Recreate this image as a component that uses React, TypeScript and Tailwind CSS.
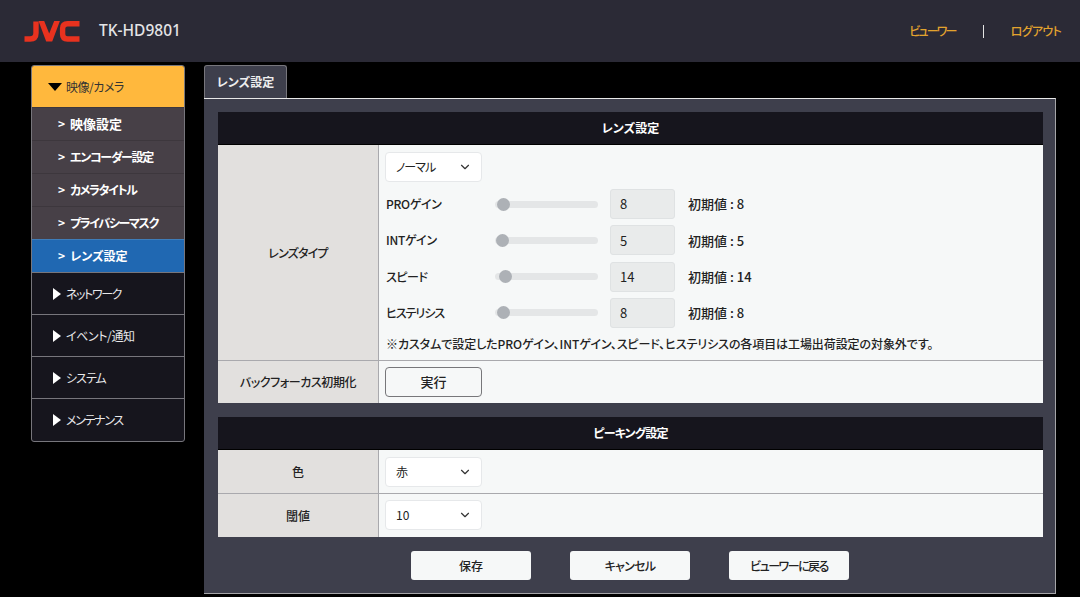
import React from 'react';
import { ChevronDown } from 'lucide-react';

// katakana in the original font is much narrower, so each string carries its own tracking
const subItems = [
  { label: '映像設定', cls: 'text-[13px]' },
  { label: 'エンコーダー設定', cls: 'text-[12px] tracking-[-1.3px]' },
  { label: 'カメラタイトル', cls: 'text-[12px] tracking-[-1.4px]' },
  { label: 'プライバシーマスク', cls: 'text-[12px] tracking-[-1.4px]' },
  { label: 'レンズ設定', cls: 'text-[12px]' },
];
const navItems = [
  { label: 'ネットワーク', cls: 'tracking-[-1.4px]', h: 'h-[42px]' },
  { label: 'イベント/通知', cls: 'tracking-[-0.4px]', h: 'h-[42px]' },
  { label: 'システム', cls: 'tracking-[-1px]', h: 'h-[42px]' },
  { label: 'メンテナンス', cls: 'tracking-[-1.3px]', h: 'h-[43px]' },
];
const sliders = [
  { label: 'PROゲイン', value: 8, thumb: 'ml-[2px]', cls: 'tracking-[-0.3px]' },
  { label: 'INTゲイン', value: 5, thumb: 'ml-[1px]', cls: 'tracking-[-0.3px]' },
  { label: 'スピード', value: 14, thumb: 'ml-[4px]', cls: 'tracking-[-0.5px]' },
  { label: 'ヒステリシス', value: 8, thumb: 'ml-[2px]', cls: 'tracking-[-1px]' },
];

function Logo() {
  return (
    <svg width="56" height="21" viewBox="0 0 56 21" className="shrink-0">
      <path d="M12 0.5 V12 Q12 18 6 18 H0.5" fill="none" stroke="#e8321f" strokeWidth="5.4" />
      <polygon points="14.5,0 20.2,0 25.2,12.5 30.2,0 35.9,0 28.2,20.5 22.2,20.5" fill="#e8321f" />
      <path d="M55.5 2.7 H43.5 Q38.6 2.7 38.6 7.5 V13.3 Q38.6 18 43.5 18 H55.5" fill="none" stroke="#e8321f" strokeWidth="5.4" />
    </svg>
  );
}

function Select({ value, cls }: { value: string; cls?: string }) {
  return (
    <div className="w-[97px] h-[30px] bg-white border border-[#e6e8ea] rounded-[4px] flex items-center justify-between pl-[10px] pr-[9px] text-[12px] text-[#222]">
      <span className={cls}>{value}</span>
      <ChevronDown className="w-[14px] h-[14px] text-[#333]" strokeWidth={2} />
    </div>
  );
}

function SectionHead({ title, cls }: { title: string; cls?: string }) {
  return (
    <div className={`h-[33px] bg-[#16151d] flex items-center justify-center text-white text-[12px] font-bold border-b border-black ${cls ?? ''}`}>
      {title}
    </div>
  );
}

function Row({ label, labelCls, cellCls, children, last }: { label: string; labelCls?: string; cellCls: string; children: React.ReactNode; last?: boolean }) {
  return (
    <div className={`flex ${last ? '' : 'border-b border-[#a9a9ad]'}`}>
      <div className={`w-[161px] shrink-0 bg-[#e2e0de] border-r border-[#a9a9ad] flex items-center justify-center text-[12px] font-medium text-[#222] ${labelCls ?? ''}`}>
        {label}
      </div>
      <div className={`flex-1 bg-[#f6f8f8] px-[6px] ${cellCls}`}>{children}</div>
    </div>
  );
}

function FootButton({ label, cls }: { label: string; cls?: string }) {
  return (
    <button className={`w-[120px] h-[29px] bg-[#f6f8f8] rounded-[3px] text-[12px] font-medium text-[#222] ${cls ?? ''}`}>{label}</button>
  );
}

export default function App() {
  return (
    <div className="h-[597px] w-full bg-black overflow-hidden font-['Noto_Sans_CJK_JP','Noto_Sans',sans-serif] [font-feature-settings:'palt']">
      <header className="h-[62px] bg-[#2b2a36] flex items-center pl-[24px] pr-[19px]">
        <Logo />
        <span className="ml-[19px] text-[15.5px] font-medium text-[#e4e4e6] font-['Noto_Sans',sans-serif]">TK-HD9801</span>
        <div className="ml-auto flex items-center text-[12px] font-medium text-[#e2a32e]">
          <span className="tracking-[-1.8px]">ビューワー</span>
          <span className="mx-[27px] w-px h-[13px] bg-[#e4e4e4]" />
          <span className="tracking-[-0.7px]">ログアウト</span>
        </div>
      </header>

      <div className="flex items-start pl-[31px] pt-[3px] gap-[19px]">
        <nav className="w-[154px] shrink-0 rounded-[3px] border border-[#77767c] overflow-hidden bg-[#16151d]">
          <div className="h-[41px] bg-[#ffb83d] flex items-center pl-[16px] text-[12px] text-[#333] gap-[4px]">
            <span className="w-0 h-0 border-x-[7px] border-x-transparent border-t-[8px] border-t-black" />
            <span className="tracking-[-0.5px]">映像/カメラ</span>
          </div>
          {subItems.map((s) => {
            const active = s.label === 'レンズ設定';
            return (
              <div
                key={s.label}
                className={`h-[33px] flex items-center pl-[26px] font-bold text-white border-t ${active ? 'bg-[#2068b2] border-[#3e7db9]' : 'bg-[#474047] border-[#3d373d]'}`}
              >
                <span className="mr-[5px] text-[12px]">&gt;</span>
                <span className={s.cls}>{s.label}</span>
              </div>
            );
          })}
          {navItems.map((n) => (
            <div key={n.label} className={`${n.h} flex items-center pl-[21px] gap-[5px] text-[12px] text-[#e8e8ea] border-t border-[#77767c]`}>
              <span className="w-0 h-0 border-y-[6px] border-y-transparent border-l-[8px] border-l-white" />
              <span className={n.cls}>{n.label}</span>
            </div>
          ))}
        </nav>

        <main className="w-[852px] shrink-0">
          <div className="w-[83px] h-[33px] bg-[#3e3f4c] border border-b-0 border-[#77767c] rounded-t-[3px] flex items-center justify-center text-[12px] font-bold text-[#eee]">
            レンズ設定
          </div>
          <div className="h-[496px] bg-[#3e3f4c] border-t border-t-[#e8e8e8] border-b border-b-[#a5a5a8] border-r border-r-[#a5a5a8] pl-[14px] pr-[12px] pt-[13px]">
            <SectionHead title="レンズ設定" />
            <Row label="レンズタイプ" labelCls="tracking-[-0.8px]" cellCls="py-[7px]">
              <Select value="ノーマル" cls="tracking-[-1px]" />
              <div className="mt-[7px] h-[139px] flex flex-col justify-between">
                {sliders.map((s) => (
                  <div key={s.label} className="flex items-center h-[30px] text-[12px] font-medium text-[#222]">
                    <span className={`w-[110px] pl-[1px] ${s.cls}`}>{s.label}</span>
                    <div className="w-[103px] h-[7px] rounded-full bg-[#e4e6e7] flex items-center">
                      <span className={`w-[13px] h-[13px] rounded-full bg-[#adb1b6] ${s.thumb}`} />
                    </div>
                    <div className="ml-[12px] w-[65px] h-[30px] bg-[#e9ebeb] border border-[#dfe2e3] rounded-[3px] flex items-center pl-[9px] text-[13px] font-normal">
                      {s.value}
                    </div>
                    <span className="ml-[13px] text-[13px]">初期値 : {s.value}</span>
                  </div>
                ))}
              </div>
              <p className="mt-[7px] pl-[1px] text-[12px] font-medium text-[#222] leading-[18px] tracking-[-0.08px]">
                ※カスタムで設定したPROゲイン、INTゲイン、スピード、ヒステリシスの各項目は工場出荷設定の対象外です。
              </p>
            </Row>
            <Row label="バックフォーカス初期化" labelCls="tracking-[-0.4px]" cellCls="py-[6px]" last>
              <button className="block w-[97px] h-[30px] bg-[#f6f8f8] border border-[#77777a] rounded-[4px] text-[13px] font-medium text-[#222]">実行</button>
            </Row>

            <div className="h-[14px]" />

            <SectionHead title="ピーキング設定" cls="tracking-[-0.8px]" />
            <Row label="色" cellCls="pt-[7px] pb-[6px]">
              <Select value="赤" />
            </Row>
            <Row label="閾値" cellCls="pt-[6px] pb-[7px]" last>
              <Select value="10" />
            </Row>

            <div className="mt-[14px] flex justify-center gap-[39px] pr-[1px]">
              <FootButton label="保存" />
              <FootButton label="キャンセル" cls="tracking-[-0.7px]" />
              <FootButton label="ビューワーに戻る" cls="tracking-[-1.5px]" />
            </div>
          </div>
        </main>
      </div>
    </div>
  );
}
